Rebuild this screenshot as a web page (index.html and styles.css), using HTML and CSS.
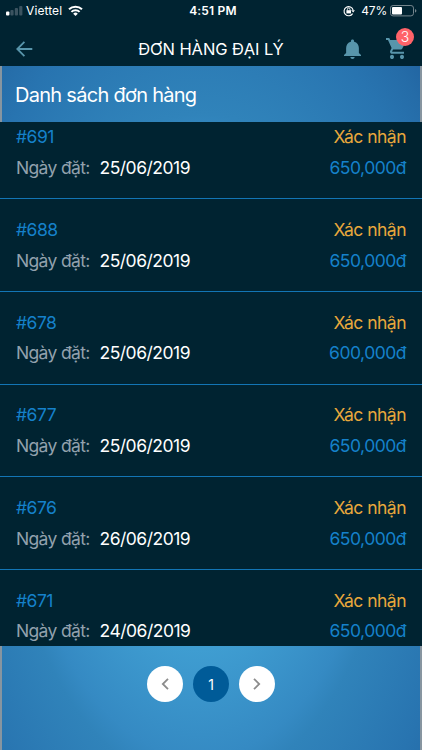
FILE: index.html
```
<!DOCTYPE html>
<html lang="vi">
<head>
    <meta charset="UTF-8">
    <meta name="viewport" content="width=device-width, initial-scale=1.0">
    <title>Đơn hàng đại lý</title>
    <link rel="stylesheet" href="styles.css">
</head>
<body>
    <div class="status-bar">
        <div class="carrier">
            <svg class="signal" width="17" height="10" viewBox="0 0 17 10">
                <rect x="0" y="5.5" width="3.4" height="4" rx="1" fill="#fff"/>
                <rect x="4.4" y="4" width="3.2" height="5.5" rx="1" fill="#3b5360"/>
                <rect x="8.8" y="2" width="3.2" height="7.5" rx="1" fill="#3b5360"/>
                <rect x="13.2" y="0" width="3.2" height="9.5" rx="1" fill="#3b5360"/>
            </svg>
            <span class="carrier-name">Viettel</span>
            <svg class="wifi" width="15" height="11" viewBox="0 0 15 11" fill="none" stroke="#fff" stroke-width="2">
                <path d="M1 4.3a9.3 9.3 0 0 1 13 0M3.4 6.9a5.9 5.9 0 0 1 8.2 0"/>
                <path d="M7.5 11L5.2 8.7a3.3 3.3 0 0 1 4.6 0z" fill="#fff" stroke="none"/>
            </svg>
        </div>
        <span class="time">4:51 PM</span>
        <div class="power">
            <svg class="lock" width="12" height="12" viewBox="0 0 12 12" fill="none" stroke="#fff">
                <path d="M9.6 8.6A4.6 4.6 0 1 1 10.1 5" stroke-width="1.1"/>
                <path d="M8.2 5.2h3.7L10.2 7.6z" fill="#fff" stroke="none"/>
                <rect x="3.4" y="5.2" width="4.6" height="3.2" fill="#fff" stroke="none"/>
                <path d="M4.4 5.4V4.3a1.3 1.3 0 0 1 2.6 0v1.1" stroke-width=".9"/>
            </svg>
            <span class="percent">47%</span>
            <svg class="battery" width="27" height="12" viewBox="0 0 27 12">
                <rect x=".5" y=".5" width="23" height="10.4" rx="2.6" fill="none" stroke="#75858d"/>
                <rect x="2" y="2" width="10" height="7.4" rx="1" fill="#fff"/>
                <path d="M25 4v3.6q1.4-.4 1.4-1.8T25 4z" fill="#75858d"/>
            </svg>
        </div>
    </div>

    <div class="header">
        <svg class="back" width="17" height="16" viewBox="0 0 17 16" fill="none" stroke="#5895ab" stroke-width="1.8">
            <path d="M16.3 8H1.6M8.4 .9L1.3 8l7.1 7.1"/>
        </svg>
        <h1>ĐƠN HÀNG ĐẠI LÝ</h1>
        <svg class="bell" width="17" height="20" viewBox="4 2 16 20" preserveAspectRatio="none" fill="#5895ab">
            <path d="M12 22c1.1 0 2-.9 2-2h-4c0 1.1.9 2 2 2zm6-6v-5c0-3.07-1.63-5.64-4.5-6.32V4c0-.83-.67-1.5-1.5-1.5s-1.5.67-1.5 1.5v.68C7.64 5.36 6 7.92 6 11v5l-2 2v1h16v-1l-2-2z"/>
        </svg>
        <div class="cart">
            <svg width="20" height="21" viewBox="1 2 20 20" preserveAspectRatio="none" fill="#5895ab">
                <path d="M7 18c-1.1 0-1.99.9-1.99 2S5.9 22 7 22s2-.9 2-2-.9-2-2-2zM1 2v2h2l3.6 7.59-1.35 2.45c-.16.28-.25.61-.25.96 0 1.1.9 2 2 2h12v-2H7.42c-.14 0-.25-.11-.25-.25l.03-.12.9-1.63h7.45c.75 0 1.41-.41 1.75-1.03l3.58-6.49A1 1 0 0 0 20 4H5.21l-.94-2H1zm16 16c-1.1 0-1.99.9-1.99 2s.89 2 1.99 2 2-.9 2-2-.9-2-2-2z"/>
            </svg>
            <span class="badge">3</span>
        </div>
    </div>

    <div class="content">
        <h2>Danh sách đơn hàng</h2>
        <div class="orders">
            <div class="order">
                <div class="row"><span class="code">#691</span><span class="status">Xác nhận</span></div>
                <div class="row"><span class="label">Ngày đặt:</span><span class="date">25/06/2019</span><span class="price">650,000đ</span></div>
            </div>
            <div class="order">
                <div class="row"><span class="code">#688</span><span class="status">Xác nhận</span></div>
                <div class="row"><span class="label">Ngày đặt:</span><span class="date">25/06/2019</span><span class="price">650,000đ</span></div>
            </div>
            <div class="order">
                <div class="row"><span class="code">#678</span><span class="status">Xác nhận</span></div>
                <div class="row"><span class="label">Ngày đặt:</span><span class="date">25/06/2019</span><span class="price">600,000đ</span></div>
            </div>
            <div class="order">
                <div class="row"><span class="code">#677</span><span class="status">Xác nhận</span></div>
                <div class="row"><span class="label">Ngày đặt:</span><span class="date">25/06/2019</span><span class="price">650,000đ</span></div>
            </div>
            <div class="order">
                <div class="row"><span class="code">#676</span><span class="status">Xác nhận</span></div>
                <div class="row"><span class="label">Ngày đặt:</span><span class="date">26/06/2019</span><span class="price">650,000đ</span></div>
            </div>
            <div class="order">
                <div class="row"><span class="code">#671</span><span class="status">Xác nhận</span></div>
                <div class="row"><span class="label">Ngày đặt:</span><span class="date">24/06/2019</span><span class="price">650,000đ</span></div>
            </div>
        </div>
        <div class="pagination">
            <button type="button" class="page">
                <svg width="8" height="12" viewBox="0 0 8 12" fill="none" stroke="#8c8c8c" stroke-width="1.8"><path d="M7 .8L1.8 6 7 11.2"/></svg>
            </button>
            <button type="button" class="page active">1</button>
            <button type="button" class="page">
                <svg width="8" height="12" viewBox="0 0 8 12" fill="none" stroke="#8c8c8c" stroke-width="1.8"><path d="M1 .8L6.2 6 1 11.2"/></svg>
            </button>
        </div>
    </div>
</body>
</html>
```

FILE: styles.css
```
* {
    box-sizing: border-box;
}
body {
    font-family: Inter, "Noto Sans", sans-serif;
    background-color: #002331;
    color: #fff;
    margin: 0;
    height: 100vh;
    overflow: hidden;
    display: flex;
    flex-direction: column;
}
.status-bar {
    display: grid;
    grid-template-columns: 1fr auto 1fr;
    align-items: center;
    height: 22px;
    padding: 0 5px 0 6px;
    font-size: 12px;
    line-height: 22px;
}
.carrier, .power {
    display: flex;
    align-items: center;
}
.carrier-name {
    margin-left: 3px;
    letter-spacing: 0.1px;
}
.wifi {
    margin-left: 6px;
    margin-top: -2px;
}
.time {
    font-weight: 600;
    letter-spacing: 0.2px;
    margin-left: 3px;
}
.power {
    justify-content: flex-end;
}
.percent {
    margin-left: 6px;
    margin-right: 3px;
    letter-spacing: -0.2px;
}
.header {
    display: flex;
    align-items: center;
    height: 44px;
    padding: 9px 16px 0 16px;
}
h1 {
    flex: 1;
    margin: 0 0 0 45px;
    text-align: center;
    font-size: 16.5px;
    font-weight: 400;
    line-height: 20px;
    letter-spacing: -0.1px;
}
.bell {
    margin-right: 25px;
}
.cart {
    position: relative;
    height: 21px;
}
.cart svg {
    display: block;
}
.badge {
    position: absolute;
    top: -10px;
    right: -8px;
    width: 18px;
    height: 18px;
    border-radius: 50%;
    background-color: #ff6369;
    font-size: 14px;
    font-weight: 300;
    line-height: 18px;
    text-align: center;
}
.content {
    flex: 1;
    background: linear-gradient(90deg, #8795a0 2px, transparent 2px, transparent 420px, #8795a0 420px),
        radial-gradient(330px 570px at 200px 384px, #48aada 0, #3f9dd1 35%, #358ac3 54%, #3083ba 59%, #2874b0 81%, #256ca8 90%, #1f5f9d 100%);
}
h2 {
    margin: 0;
    height: 55.5px;
    padding: 0 15px;
    font-size: 20px;
    font-weight: 400;
    line-height: 58px;
    letter-spacing: -0.72px;
}
.orders {
    height: 524.5px;
    overflow: hidden;
    background-color: #002331;
}
.order {
    height: 92.7px;
    padding: 15.8px 16px 0;
    border-bottom: 1px solid #1275b5;
    font-size: 17.5px;
    letter-spacing: -0.5px;
}
.order:first-child {
    margin-top: -15px;
}
.row {
    display: flex;
    line-height: 30.7px;
}
.code, .price {
    color: #1581ca;
}
.label {
    width: 83.5px;
    color: #92a1ad;
    letter-spacing: -0.65px;
}
.status, .price {
    margin-left: auto;
}
.status {
    color: #e8a83c;
}
.pagination {
    display: flex;
    justify-content: center;
    gap: 10px;
    padding-top: 20px;
}
.page {
    display: flex;
    justify-content: center;
    align-items: center;
    width: 36px;
    height: 36px;
    padding: 0;
    border: none;
    border-radius: 50%;
    background-color: #fff;
    font: inherit;
    font-size: 14px;
    cursor: pointer;
}
.page.active {
    background-color: #005b98;
    color: #fff;
}
```
